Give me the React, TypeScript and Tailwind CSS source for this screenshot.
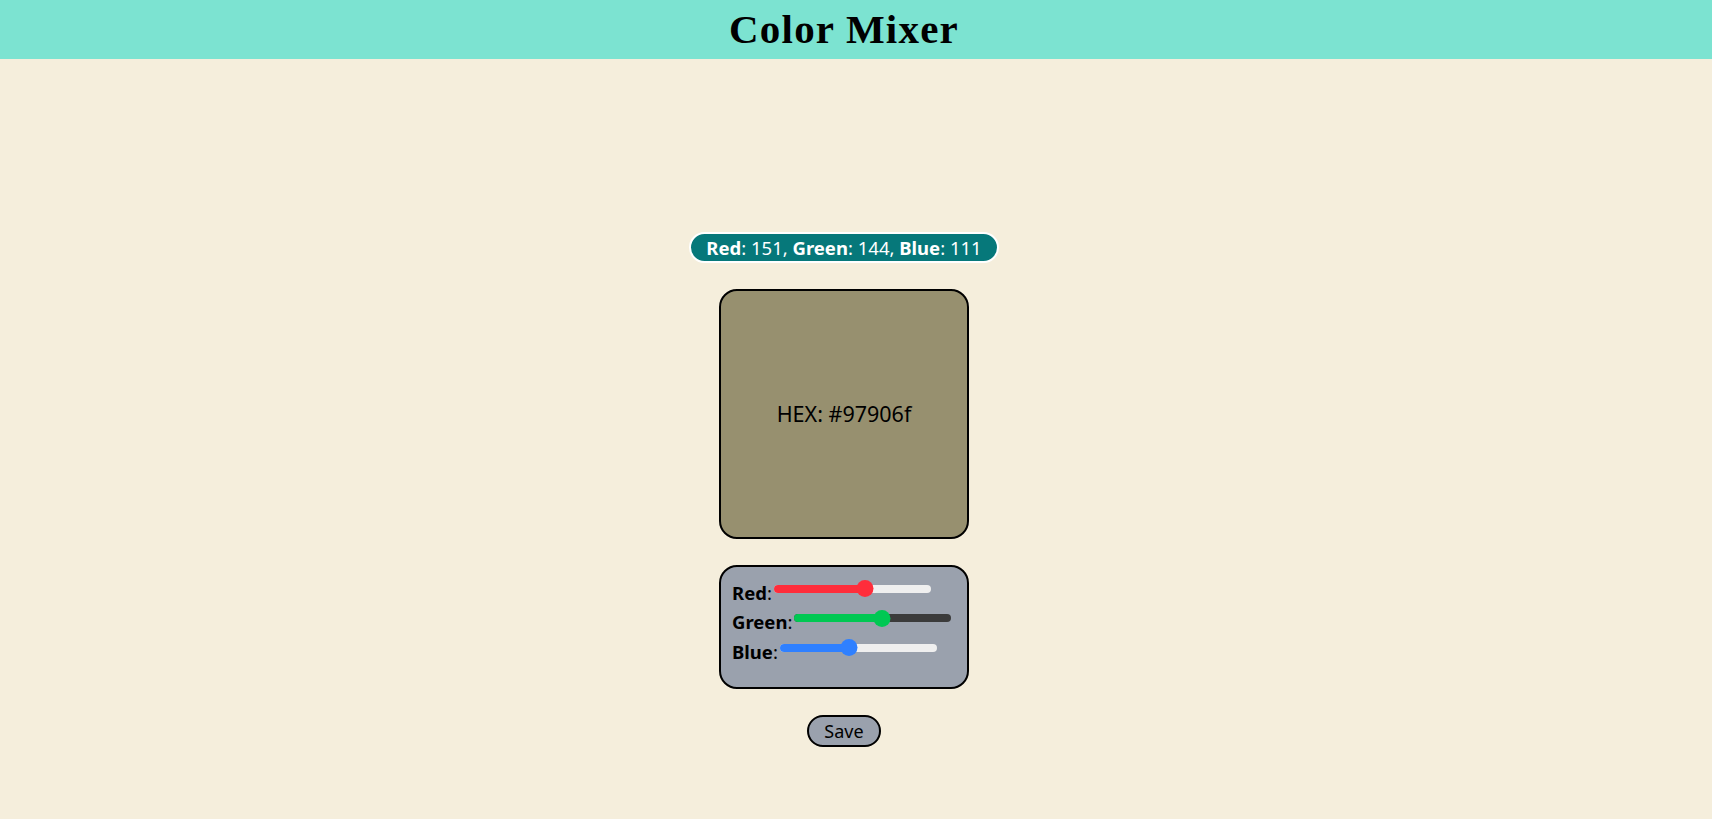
import { useState } from "react";

const sans = "font-['Segoe_UI','Noto_Sans',sans-serif]";

type Channel = { key: "r" | "g" | "b"; label: string; color: string; rest: string };

const channels: Channel[] = [
  { key: "r", label: "Red", color: "bg-[#ff2d3b]", rest: "bg-[#efefef]" },
  { key: "g", label: "Green", color: "bg-[#00c853]", rest: "bg-[#3b3b3b]" },
  { key: "b", label: "Blue", color: "bg-[#2f80ff]", rest: "bg-[#efefef]" },
];

function Slider({ value, color, rest }: { value: number; color: string; rest: string }) {
  // native-range look: 17px thumb travels inside the track
  const pos = 8.5 + (value / 255) * 140;
  return (
    <div className="relative mx-[2px] mb-[8px] h-[17px] w-[157px] shrink-0">
      <div className={`absolute inset-x-0 top-[4.5px] h-[8px] rounded-full ${rest}`} />
      <div className={`absolute left-0 top-[4.5px] h-[8px] rounded-full ${color}`} style={{ width: pos }} />
      <div className={`absolute top-0 h-[17px] w-[17px] -translate-x-1/2 rounded-full ${color}`} style={{ left: pos }} />
    </div>
  );
}

export default function App() {
  const [rgb] = useState({ r: 151, g: 144, b: 111 });
  const hex = "#" + [rgb.r, rgb.g, rgb.b].map((n) => n.toString(16).padStart(2, "0")).join("");

  return (
    <div className={`min-h-[819px] bg-[#f5eedc] ${sans} text-black`}>
      <header className="flex h-[59px] items-center justify-center bg-[#7ce3d1] pr-6">
        <h1 className="font-['Liberation_Serif',serif] text-[41px] font-bold leading-none tracking-[1.2px]">Color Mixer</h1>
      </header>

      <main className="flex flex-col items-center gap-[26px] pr-6 pt-[173px]">
        <p className="flex h-[31px] items-center whitespace-nowrap rounded-full border-2 border-white bg-[#06787a] px-[15px] text-[18.5px] text-white">
          <b>Red</b>: {rgb.r},&nbsp;<b>Green</b>: {rgb.g},&nbsp;<b>Blue</b>: {rgb.b}
        </p>

        <div
          className="flex h-[250px] w-[250px] items-center justify-center rounded-[18px] border-2 border-black text-[21.5px]"
          style={{ backgroundColor: hex }}
        >
          HEX: {hex}
        </div>

        <div className="flex h-[124px] w-[250px] flex-col rounded-[18px] border-2 border-black bg-[#9aa1ad] px-[11px] pt-[11px]">
          {channels.map((c) => (
            <div key={c.key} className="flex h-[29.5px] items-center whitespace-nowrap text-[18.5px]">
              <span>
                <b>{c.label}</b>:
              </span>
              <Slider value={rgb[c.key]} color={c.color} rest={c.rest} />
            </div>
          ))}
        </div>

        <button className="h-[32px] w-[74px] rounded-full border-2 border-black bg-[#9aa1ad] text-[18px] leading-none">
          Save
        </button>
      </main>
    </div>
  );
}
